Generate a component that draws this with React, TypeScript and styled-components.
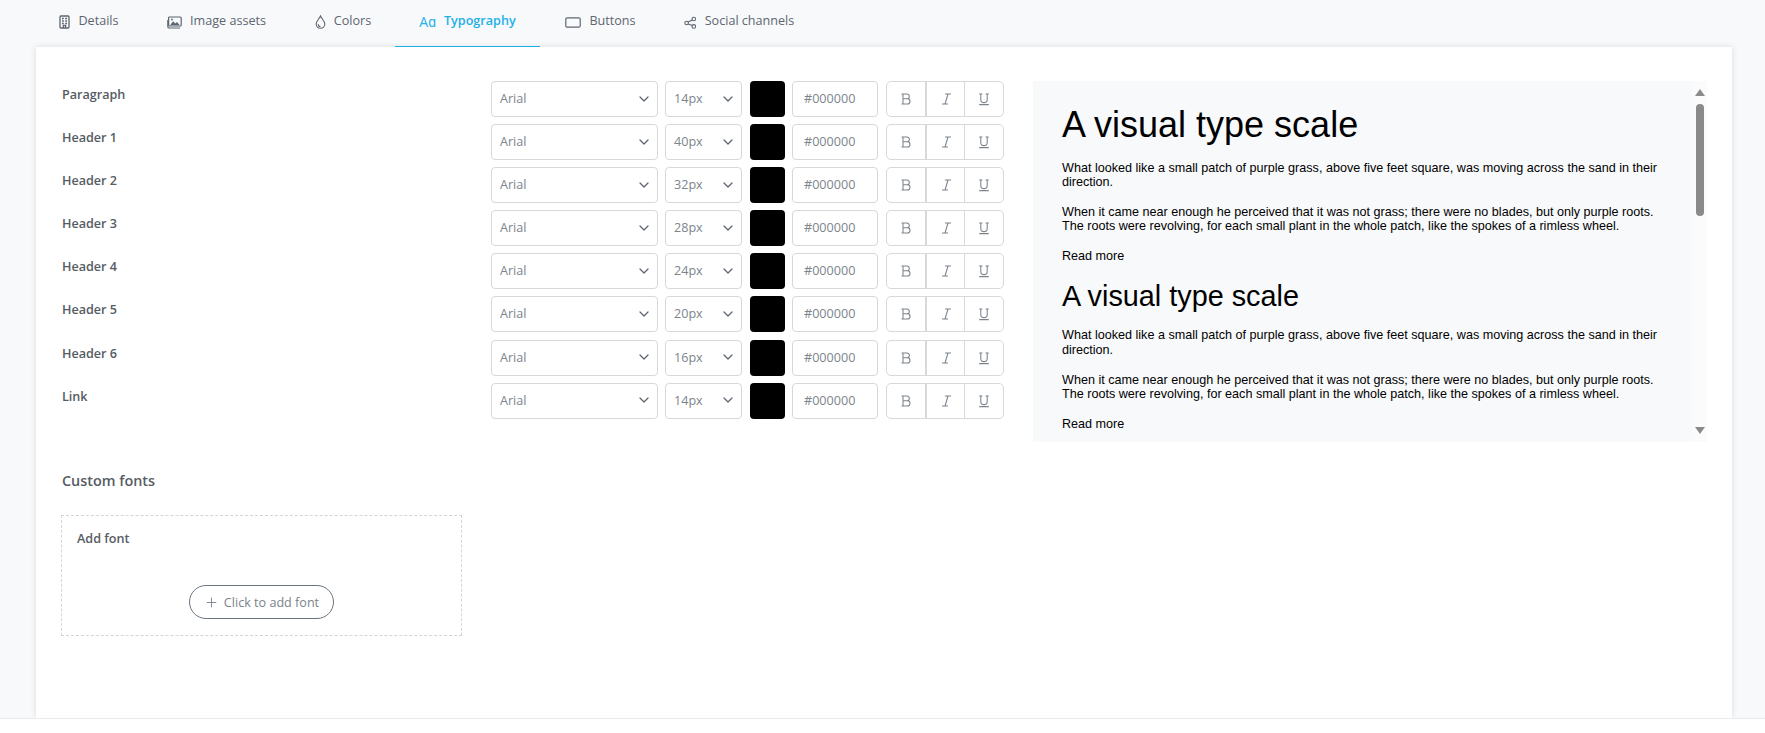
import React from 'react';
import styled, { createGlobalStyle } from 'styled-components';
import { ChevronDown, Plus } from 'lucide-react';

const GlobalStyle = createGlobalStyle`
	html, body {
		margin: 0;
		padding: 0;
		height: 100%;
		background: #ffffff;
		font-family: 'Open Sans', sans-serif;
	}
	* {
		box-sizing: border-box;
	}
`;

type ReactIcon = () => React.ReactElement;

const TabIcons: Record<string, ReactIcon> = {
	Details: () => (
		<svg width="11" height="14" viewBox="0 0 11 14" fill="none" stroke="currentColor" strokeWidth="1.3">
			<rect x="1" y="1" width="9" height="12" rx="1" />
			<path d="M3 3.6h1.8M6.2 3.6H8M3 6h1.8M6.2 6H8M3 8.4h1.8M6.2 8.4H8" strokeWidth="1.5" />
			<path d="M4.4 13v-2.6h2.2V13" />
		</svg>
	),
	'Image assets': () => (
		<svg width="15" height="13" viewBox="0 0 15 13" fill="none" stroke="currentColor" strokeWidth="1.2">
			<rect x="1.6" y="1" width="12.6" height="9" rx="1" />
			<path d="M.8 4v6.4a1.6 1.6 0 0 0 1.6 1.6h10.6" />
			<path d="M3 9.2l3.2-4 2 2.3 1.8-1.4 2.8 3.1z" fill="currentColor" stroke="none" />
			<circle cx="5" cy="3.5" r=".9" fill="currentColor" stroke="none" />
		</svg>
	),
	Colors: () => (
		<svg width="11" height="14" viewBox="0 0 11 14" fill="none" stroke="currentColor" strokeWidth="1.1">
			<path d="M5.5 1C4.7 3.2 1.2 6 1.2 9a4.3 4.3 0 0 0 8.6 0C9.8 6 6.3 3.2 5.5 1z" />
			<path d="M3.2 9.2a2.3 2.3 0 0 0 2.3 2.3" />
		</svg>
	),
	Typography: () => <AaGlyph>Aɑ</AaGlyph>,
	Buttons: () => (
		<svg width="16" height="11" viewBox="0 0 16 11" fill="none" stroke="currentColor" strokeWidth="1.2">
			<rect x=".8" y=".8" width="14.4" height="9.4" rx="1.5" />
		</svg>
	),
	'Social channels': () => (
		<svg width="13" height="13" viewBox="0 0 13 13" fill="none" stroke="currentColor" strokeWidth="1.1">
			<circle cx="2.6" cy="7" r="1.8" />
			<circle cx="9.8" cy="3" r="1.8" />
			<circle cx="9.8" cy="10.4" r="1.8" />
			<path d="M4.2 6.1l4-2.2M4.2 7.9l4 1.7" />
		</svg>
	),
};

const tabs = [
	{ name: 'Details', width: 106 },
	{ name: 'Image assets', width: 149 },
	{ name: 'Colors', width: 104 },
	{ name: 'Typography', width: 145, active: true },
	{ name: 'Buttons', width: 121 },
	{ name: 'Social channels', width: 156 },
];

const rows = [
	{ label: 'Paragraph', size: '14px' },
	{ label: 'Header 1', size: '40px' },
	{ label: 'Header 2', size: '32px' },
	{ label: 'Header 3', size: '28px' },
	{ label: 'Header 4', size: '24px' },
	{ label: 'Header 5', size: '20px' },
	{ label: 'Header 6', size: '16px' },
	{ label: 'Link', size: '14px' },
];

function StyleButtons() {
	return (
		<ButtonGroup>
			<StyleButton>
				<svg width="12" height="14" viewBox="0 0 12 14" fill="none" stroke="currentColor" strokeWidth="1.05">
					<path d="M1.5 2h5.4a2.4 2.4 0 0 1 0 4.8H3M3 6.8h4.4a2.6 2.6 0 0 1 0 5.2H1.5M3 2v10" />
				</svg>
			</StyleButton>
			<StyleButton>
				<svg width="12" height="14" viewBox="0 0 12 14" fill="none" stroke="currentColor" strokeWidth="1.05">
					<path d="M5 2h6M2 12h6M8 2L5 12" />
				</svg>
			</StyleButton>
			<StyleButton>
				<svg width="12" height="14" viewBox="0 0 12 14" fill="none" stroke="currentColor" strokeWidth="1.05">
					<path d="M2.8 2v5.4a3.2 3.2 0 0 0 6.4 0V2M1.2 2h3.2M7.6 2h3.2" />
					<path d="M1.2 12.6h9.6" strokeWidth="1.4" />
				</svg>
			</StyleButton>
		</ButtonGroup>
	);
}

function SampleBlock({ big }: { big?: boolean }) {
	return (
		<SampleWrap>
			<SampleTitle $big={big}>A visual type scale</SampleTitle>
			<SampleText>
				What looked like a small patch of purple grass, above five feet square, was moving across the sand in their
				direction.
			</SampleText>
			<SampleText>
				When it came near enough he perceived that it was not grass; there were no blades, but only purple roots. The
				roots were revolving, for each small plant in the whole patch, like the spokes of a rimless wheel.
			</SampleText>
			<SampleLink>Read more</SampleLink>
		</SampleWrap>
	);
}

export default function App() {
	return (
		<Page>
			<GlobalStyle />
			<TabBar>
				{tabs.map((tab) => {
					const Icon = TabIcons[tab.name];
					return (
						<Tab key={tab.name} $active={tab.active} $width={tab.width}>
							<Icon />
							<span>{tab.name}</span>
						</Tab>
					);
				})}
			</TabBar>
			<Card>
				<TopGrid>
					<Rows>
						{rows.map((row) => (
							<Row key={row.label}>
								<RowLabel>{row.label}</RowLabel>
								<FontSelect>
									Arial
									<ChevronDown size={16} strokeWidth={1.9} />
								</FontSelect>
								<SizeSelect>
									{row.size}
									<ChevronDown size={16} strokeWidth={1.9} />
								</SizeSelect>
								<Swatch />
								<HexInput>#000000</HexInput>
								<StyleButtons />
							</Row>
						))}
					</Rows>
					<Preview>
						<PreviewBody>
							<SampleBlock big />
							<SampleBlock />
						</PreviewBody>
						<ScrollRail>
							<ArrowUp />
							<ScrollThumb />
							<ArrowDown />
						</ScrollRail>
					</Preview>
				</TopGrid>
				<SectionTitle>Custom fonts</SectionTitle>
				<AddFontBox>
					<AddFontLabel>Add font</AddFontLabel>
					<AddFontButton>
						<Plus size={15} strokeWidth={1.5} />
						Click to add font
					</AddFontButton>
				</AddFontBox>
			</Card>
			<Footer />
		</Page>
	);
}

const Page = styled.div`
	display: flex;
	flex-direction: column;
	height: 733px;
	overflow: hidden;
	background: #f8f9fb;
`;

const TabBar = styled.nav`
	display: flex;
	flex: 0 0 45px;
	padding-left: 36px;
	position: relative;
	z-index: 1;
`;

const Tab = styled.div<{ $active?: boolean; $width: number }>`
	display: flex;
	align-items: center;
	justify-content: center;
	gap: 8px;
	width: ${(p) => p.$width}px;
	height: 47px;
	padding-bottom: 6px;
	font-size: 12.6px;
	font-weight: ${(p) => (p.$active ? 600 : 400)};
	color: ${(p) => (p.$active ? '#1fb0e8' : '#5d6670')};
	border-bottom: ${(p) => (p.$active ? '1px solid #1fb0e8' : '0')};

	svg {
		margin-top: 3px;
	}
`;

const AaGlyph = styled.span`
	font-size: 14px;
	font-weight: 400;
	padding-top: 3px;
`;

const Card = styled.main`
	flex: 1;
	margin: 0 33px 0 36px;
	padding: 34px 25px 0 26px;
	background: #ffffff;
	box-shadow: 0 0 6px rgba(0, 0, 0, 0.12);
`;

const TopGrid = styled.div`
	display: flex;
	justify-content: space-between;
	align-items: flex-start;
`;

const Rows = styled.div`
	display: flex;
	flex-direction: column;
	gap: 7.1px;
`;

const Row = styled.div`
	display: flex;
	height: 36px;
	color: #7c848c;
	font-size: 12.6px;
`;

const RowLabel = styled.div`
	width: 429px;
	font-size: 12.6px;
	font-weight: 600;
	color: #565c63;
	line-height: 27px;
`;

const FieldBox = styled.div`
	display: flex;
	align-items: center;
	justify-content: space-between;
	height: 36px;
	padding: 0 5px 1px 8px;
	border: 1px solid #d6d8db;
	border-radius: 4px;
	background: #fff;

	svg {
		color: #5d6670;
	}
`;

const FontSelect = styled(FieldBox)`
	width: 167px;
`;

const SizeSelect = styled(FieldBox)`
	width: 77px;
	margin-left: 7px;
`;

const Swatch = styled.div`
	width: 35px;
	height: 36px;
	margin-left: 8px;
	background: #000;
	border-radius: 4px;
`;

const HexInput = styled(FieldBox)`
	width: 86px;
	margin-left: 7px;
	justify-content: flex-start;
	padding: 0 0 1px 11px;
`;

const ButtonGroup = styled.div`
	display: flex;
	width: 118px;
	height: 36px;
	margin-left: 8px;
	border: 1px solid #d6d8db;
	border-radius: 5px;
	overflow: hidden;
`;

const StyleButton = styled.div`
	flex: 1;
	display: flex;
	align-items: center;
	justify-content: center;
	color: #7b838b;

	& + & {
		border-left: 1px solid #d6d8db;
	}

	&:nth-child(2) {
		border-left-width: 2px;
	}
`;

const Preview = styled.section`
	display: flex;
	width: 674px;
	height: 361px;
	overflow: hidden;
`;

const PreviewBody = styled.div`
	flex: 1;
	padding: 26px 30px 0 29px;
	background: #f8f9fb;
	color: #000;
	font-family: 'Liberation Sans', Arial, sans-serif;
	overflow: hidden;
`;

const SampleWrap = styled.div`
	margin-bottom: 18px;
`;

const SampleTitle = styled.h2<{ $big?: boolean }>`
	margin: 0 0 ${(p) => (p.$big ? 17.5 : 17)}px;
	font-size: ${(p) => (p.$big ? 36 : 28.8)}px;
	line-height: ${(p) => (p.$big ? 36 : 30)}px;
	font-weight: 400;
`;

const SampleText = styled.p`
	margin: 0 0 15px;
	font-size: 12.6px;
	line-height: 14.6px;
`;

const SampleLink = styled.div`
	font-size: 12.6px;
	line-height: 14.6px;
`;

const ScrollRail = styled.div`
	display: flex;
	flex-direction: column;
	align-items: center;
	flex: 0 0 15px;
	padding-top: 8px;
	background: #fbfbfc;
	position: relative;
`;

const ArrowUp = styled.div`
	width: 0;
	height: 0;
	border-left: 5px solid transparent;
	border-right: 5px solid transparent;
	border-bottom: 7px solid #8a8a8a;
`;

const ScrollThumb = styled.div`
	width: 8px;
	height: 112px;
	margin-top: 8px;
	border-radius: 4px;
	background: #8a8a8a;
`;

const ArrowDown = styled(ArrowUp)`
	border-bottom: 0;
	border-top: 7px solid #8a8a8a;
	margin-top: auto;
	margin-bottom: 8px;
`;

const SectionTitle = styled.h3`
	margin: 29px 0 25px;
	font-size: 14.4px;
	line-height: 19px;
	font-weight: 600;
	color: #565c63;
`;

const AddFontBox = styled.div`
	display: flex;
	flex-direction: column;
	align-items: center;
	width: 401px;
	height: 121px;
	margin-left: -1px;
	padding: 14px 15px;
	border: 1px dashed #d3d5d8;
`;

const AddFontLabel = styled.div`
	align-self: flex-start;
	font-size: 12.6px;
	font-weight: 600;
	color: #565c63;
	line-height: 18px;
`;

const AddFontButton = styled.button`
	display: flex;
	align-items: center;
	justify-content: center;
	gap: 5px;
	width: 145px;
	height: 34px;
	margin-top: 37px;
	padding: 0;
	border: 1px solid #6a7580;
	border-radius: 17px;
	background: #fff;
	color: #7b838b;
	font-family: 'Open Sans', sans-serif;
	font-size: 12.6px;
`;

const Footer = styled.footer`
	flex: 0 0 15px;
	background: #fff;
	border-top: 1px solid #e8e9eb;
`;
